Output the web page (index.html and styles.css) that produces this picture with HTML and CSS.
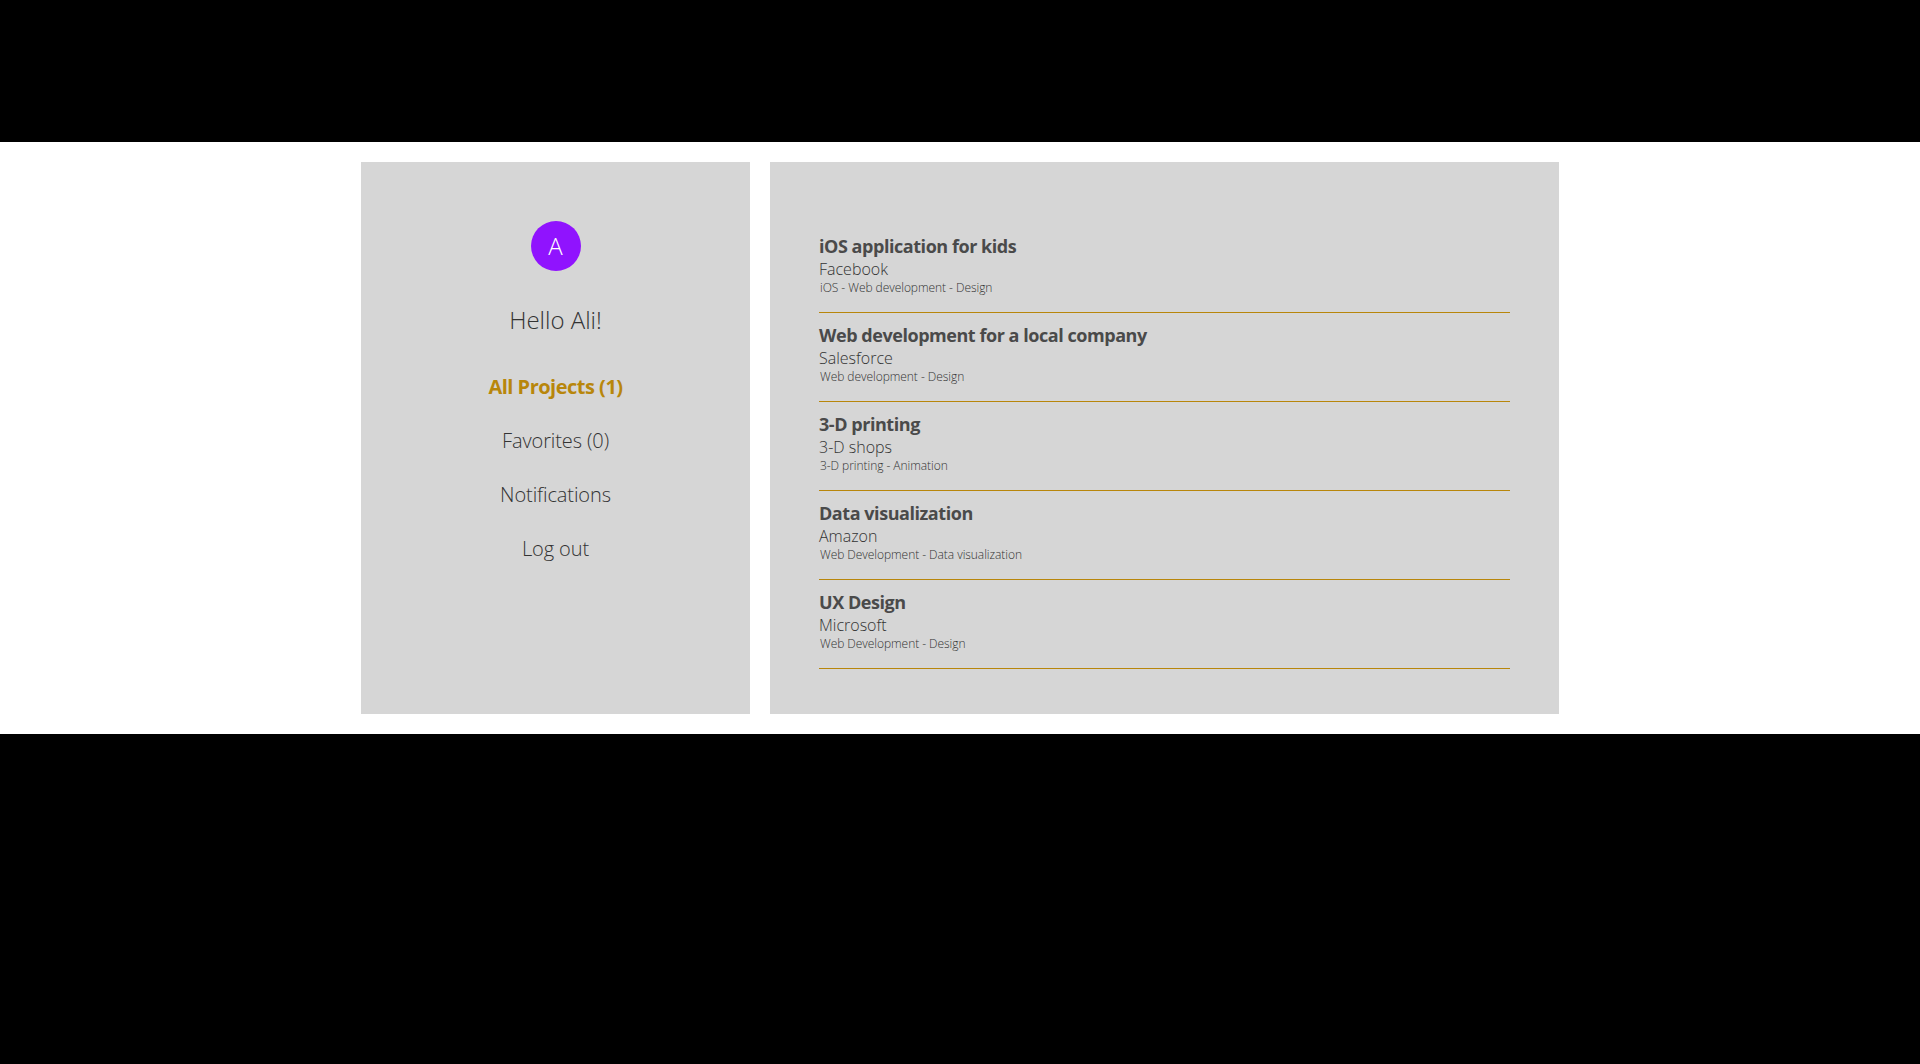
FILE: index.html
```html
<!DOCTYPE html>
<html lang="en">
<head>
<meta charset="utf-8">
<title>Projects</title>
<link rel="stylesheet" href="styles.css">
</head>
<body>
<header class="band-top"></header>
<main class="content">
  <aside class="side">
    <div class="avatar">A</div>
    <h2 class="hello">Hello Ali!</h2>
    <nav class="nav">
      <a class="nav-link active">All Projects (1)</a>
      <a class="nav-link">Favorites (0)</a>
      <a class="nav-link">Notifications</a>
      <a class="nav-link">Log out</a>
    </nav>
  </aside>
  <section class="list">
    <article class="item">
      <h3 class="title">iOS application for kids</h3>
      <p class="company">Facebook</p>
      <p class="tags">iOS - Web development - Design</p>
    </article>
    <article class="item">
      <h3 class="title">Web development for a local company</h3>
      <p class="company">Salesforce</p>
      <p class="tags">Web development - Design</p>
    </article>
    <article class="item">
      <h3 class="title">3-D printing</h3>
      <p class="company">3-D shops</p>
      <p class="tags">3-D printing - Animation</p>
    </article>
    <article class="item">
      <h3 class="title">Data visualization</h3>
      <p class="company">Amazon</p>
      <p class="tags">Web Development - Data visualization</p>
    </article>
    <article class="item">
      <h3 class="title">UX Design</h3>
      <p class="company">Microsoft</p>
      <p class="tags">Web Development - Design</p>
    </article>
  </section>
</main>
<footer class="band-bottom"></footer>
</body>
</html>
```
FILE: styles.css
```css
* { box-sizing: border-box; }
html, body { margin: 0; height: 100%; }
body {
  display: flex;
  flex-direction: column;
  background: #000;
  font-family: "Open Sans", sans-serif;
  color: #333;
}
.band-top { height: 142px; background: #000; }
.band-bottom { flex: 1; background: #000; }
.content {
  display: flex;
  justify-content: center;
  gap: 20px;
  height: 592px;
  padding: 20px 0;
  background: #fff;
}
.side {
  width: 389px;
  background: #d6d6d6;
  display: flex;
  flex-direction: column;
  align-items: center;
  padding-top: 59px;
}
.avatar {
  width: 50px;
  height: 50px;
  border-radius: 50%;
  background: #9013fe;
  color: #fff;
  font-size: 24px;
  font-weight: 300;
  line-height: 50px;
  text-align: center;
}
.hello {
  margin: 32px 0 0;
  font-size: 24px;
  font-weight: 300;
  line-height: 33px;
}
.nav { display: flex; flex-direction: column; align-items: center; gap: 27px; margin-top: 37px; }
.nav-link { font-size: 20px; line-height: 27px; font-weight: 300; letter-spacing: -0.1px; }
.active { color: #b8860b; font-weight: 700; letter-spacing: -0.5px; }
.list {
  width: 789px;
  background: #d6d6d6;
  padding: 62px 49px 0;
}
.item {
  border-bottom: 1px solid #b8860b;
  padding: 10px 0 16px;
}
.title { margin: 0; font-size: 18px; line-height: 24px; font-weight: 700; letter-spacing: -0.45px; color: #4a4a4a; }
.company { margin: 0; font-size: 16px; line-height: 22px; font-weight: 300; }
.tags { margin: 0; padding-left: 1px; font-size: 12px; line-height: 16px; font-weight: 300; letter-spacing: -0.05px; }
```
